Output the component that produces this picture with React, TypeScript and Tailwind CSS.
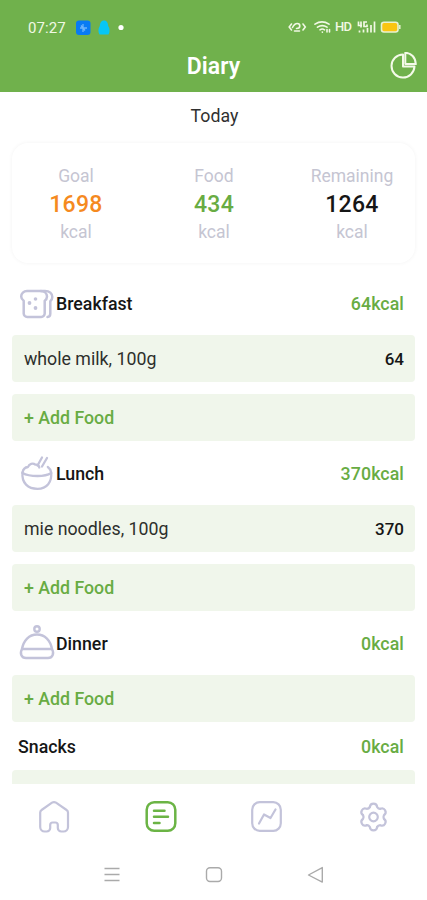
import type { ReactNode } from "react";

interface FoodEntry {
  name: string;
  kcal: number;
}

interface Meal {
  title: string;
  kcal: number;
  icon?: ReactNode;
  foods: FoodEntry[];
  collapsed?: boolean;
}

const BreadIcon = () => (
  <svg width="38" height="38" viewBox="-1 -1.5 38 38" fill="none" stroke="#c3c3da" strokeWidth="2.500" strokeLinecap="round" strokeLinejoin="round" aria-hidden="true">
    <path d="M8 4.500h13.500c3.800 0 6.500 2.400 6.500 5.500 0 2-1 3.400-2.300 4.200V27a3.500 3.500 0 0 1-3.500 3.500H8.200A3.500 3.500 0 0 1 4.700 27V14.200C3.200 13.200 2.200 11.800 2.200 10c0-3.100 2.500-5.500 5.800-5.500Z" />
    <path d="M22 4.500h4c4.500 0 7.300 2.500 7.300 6 0 1.900-.8 3.200-2 4.200V27c0 2-1 3.400-2.800 3.600" />
    <g fill="#c3c3da" stroke="none">
      <circle cx="16.500" cy="12.500" r="1.800" />
      <circle cx="10.500" cy="16.500" r="1.900" />
      <circle cx="16.500" cy="21.500" r="1.900" />
    </g>
  </svg>
);

const BowlIcon = () => (
  <svg width="38" height="38" viewBox="-1 0 38 38" fill="none" stroke="#c3c3da" strokeWidth="2.300" strokeLinecap="round" strokeLinejoin="round" aria-hidden="true">
    <path d="M3.500 17.500C2.500 28 9 33.800 18.500 33.800S33 27 32.200 17.500c-.5-2.500-1.500-4.200-3.400-5.500" />
    <path d="M3.500 18c4 2.300 9.300 3 15 3s10-.7 13.700-3" />
    <path d="M3.500 17.500c.6-3.300 2.500-5.200 5.500-5.500 1-3.300 5-4.500 7.300-2.300 2.200-.5 3.500.5 4 2.800" />
    <path d="M18.500 10.500 23 2.500M23 11.500l5-8.500" />
  </svg>
);

const ClocheIcon = () => (
  <svg width="38" height="38" viewBox="0 0.500 38 38" fill="none" stroke="#c3c3da" strokeWidth="2.400" strokeLinecap="round" strokeLinejoin="round" aria-hidden="true">
    <circle cx="19" cy="4.500" r="2.700" />
    <path d="M4 24.500C5.500 16 11 10 19 10S32.500 16 34 24.500" />
    <path d="M4 24.500h30c2.500 4.500.5 9-4 9H8c-4.500 0-6.500-4.500-4-9Z" />
  </svg>
);

const MEALS: Meal[] = [
  {
    title: "Breakfast",
    kcal: 64,
    icon: <BreadIcon />,
    foods: [{ name: "whole milk, 100g", kcal: 64 }],
  },
  {
    title: "Lunch",
    kcal: 370,
    icon: <BowlIcon />,
    foods: [{ name: "mie noodles, 100g", kcal: 370 }],
  },
  { title: "Dinner", kcal: 0, icon: <ClocheIcon />, foods: [] },
  { title: "Snacks", kcal: 0, foods: [], collapsed: true },
];

const StatusBar = () => (
  <div className="flex h-[40px] items-end justify-between pr-[25px] pl-7 text-[#f1f8e4]">
    <div className="flex h-[26px] items-center pt-0.5">
      <span className="w-[48px] text-[15px] tracking-[0.1px]">07:27</span>
      <svg className="-mt-px" width="50" height="16" viewBox="0 0 50 16" aria-hidden="true">
        <rect x="0" y="0.500" width="14.500" height="14.500" rx="3" fill="#087bf4" />
        <path d="M4 8h7M7 4v8M5 5.500l4 5" stroke="#6cb4fb" strokeWidth="1.300" />
        <path d="M28 0.500c3 0 4 2.500 4.200 5.500C34 8.500 34 12 32.500 14.500h-9C22 12 22 8.500 23.800 6 24 3 25 0.500 28 0.500Z" fill="#08c6f5" />
        <circle cx="45" cy="7.500" r="2.600" fill="#fff" />
      </svg>
    </div>
    <div className="flex h-[26px] items-center">
      <svg width="47" height="16" viewBox="0 0 47 16" fill="none" stroke="currentColor" strokeWidth="1.600" strokeLinecap="round" aria-hidden="true">
        <path d="m3.500 5-2.300 3 2.300 3M15 5l2.300 3L15 11M4.500 8.500C6 5.500 7.500 4.500 9.300 4.500s2.500 1 2.500 2.500S10.500 9.500 8.500 9.500M6.500 12h5" />
        <path d="M27 5.200c4.500-3 9.500-3 14 0M29.500 8.200c3-2 6.500-2 9.500 0M32 10.800c1.500-1 3-1 4.500 0M34.300 13l.1.100M39 10.500v2.500M41.500 10.500v2.500" />
      </svg>
      <span className="w-[21px] text-[13px] leading-4 font-medium tracking-[-0.8px]">HD</span>
      <svg width="24" height="16" viewBox="0 0 24 16" fill="none" stroke="currentColor" strokeWidth="1.700" aria-hidden="true">
        <path d="M2.500 2.500v4h3.500M5 2.500v6M11 3H8v4.500h3V5.500M3.500 11.500v2M7.500 10.500v3M11.500 9v4.500M15 6v7.500M18.500 2.500v11" />
      </svg>
      <svg width="22" height="16" viewBox="0 0 22 16" aria-hidden="true">
        <rect x="1.500" y="3.200" width="16.500" height="9.800" rx="2.500" fill="#fac512" stroke="#e9f2d0" strokeWidth="1.600" />
        <path d="M19.800 6v4" stroke="#e9f2d0" strokeWidth="1.500" />
      </svg>
    </div>
  </div>
);

const Header = () => (
  <header className="h-[92px] shrink-0 bg-[#70b14c]">
    <StatusBar />
    <div className="grid h-[52px] grid-cols-[1fr_auto_1fr] items-center text-white">
      <h1 className="col-start-2 pt-0.5 text-[23px] font-semibold tracking-[0.1px]">Diary</h1>
      <button type="button" className="mr-[9px] justify-self-end" aria-label="Statistics">
        <svg width="28" height="28" viewBox="0 0 28 28" fill="none" stroke="#f4fae9" strokeWidth="2" strokeLinejoin="round" aria-hidden="true">
          <path d="M13 2.500a11.500 11.500 0 1 0 11.500 12H13Z" />
          <path d="M15.300.8c6 .2 10.200 4.500 10.500 11.300H15.300Z" />
        </svg>
      </button>
    </div>
  </header>
);

interface StatProps {
  label: string;
  value: number;
  valueClassName: string;
}

const Stat = ({ label, value, valueClassName }: StatProps) => (
  <div className="flex w-[126px] flex-col items-center text-[17.500px] leading-7 text-[#c5c5d2]">
    <span>{label}</span>
    <span className={`pt-px text-[23px] leading-[27px] font-medium tracking-[0.300px] ${valueClassName}`}>{value}</span>
    <span>kcal</span>
  </div>
);

const MealSection = ({ title, kcal, icon, foods, collapsed }: Meal) => (
  <section className="text-[17.750px]">
    <div className={`flex items-center justify-between pt-0.5 pr-[11px] pl-1.5 font-medium ${icon ? "h-16" : "h-12"}`}>
      <h2 className="flex items-center text-[#161616]">
        {icon && <span className="w-[38px]">{icon}</span>}
        {title}
      </h2>
      <span className="tracking-[0.100px] text-[#68ac43]">{kcal}kcal</span>
    </div>
    <div className="grid gap-3">
      {foods.map((food) => (
        <div key={food.name} className="flex h-[47px] items-center justify-between rounded bg-[#f0f6eb] pt-0.5 pr-[11px] pl-3 text-[#2d2f2c]">
          <span>{food.name}</span>
          <span className="text-[17px] font-medium text-[#161616]">{food.kcal}</span>
        </div>
      ))}
      {collapsed ? (
        <button type="button" className="h-[14px] rounded-t bg-[#f0f6eb]" aria-label="Add food" />
      ) : (
        <button type="button" className="h-[47px] rounded bg-[#f0f6eb] pt-0.5 pl-3 text-left font-medium text-[#68ac43]">
          + Add Food
        </button>
      )}
    </div>
  </section>
);

const GEAR_ANGLES = [0, 60, 120, 180, 240, 300];

const TabBar = () => (
  <nav className="grid h-[65px] shrink-0 grid-cols-4 items-center justify-items-center pl-px text-[#c3c3da]">
    <button type="button" aria-label="Home">
      <svg width="34" height="34" viewBox="0 0 34 34" fill="none" stroke="currentColor" strokeWidth="2.200" strokeLinejoin="round" aria-hidden="true">
        <path d="M15 2.700 4.600 10a3 3 0 0 0-1.400 2.500v14.500a4.500 4.500 0 0 0 4.500 4.500h2a3.500 3.500 0 0 0 3.500-3.500V25c0-1.500 1-2.500 2.500-2.500h2.600c1.500 0 2.500 1 2.500 2.500v3a3.500 3.500 0 0 0 3.500 3.500h2.200a4.500 4.500 0 0 0 4.500-4.500V12.500a3 3 0 0 0-1.400-2.500L19 2.700a3.500 3.500 0 0 0-4 0Z" />
      </svg>
    </button>
    <button type="button" className="text-[#6bb445]" aria-label="Diary">
      <svg width="34" height="34" viewBox="0 0.500 34 34" fill="none" stroke="currentColor" strokeWidth="2.500" strokeLinecap="round" aria-hidden="true">
        <rect x="2.700" y="2.700" width="28.600" height="28.600" rx="7.500" />
        <path d="M10 11.300h10.500M10 17.300h14M10 23.500h5.500" />
      </svg>
    </button>
    <button type="button" aria-label="Progress">
      <svg width="34" height="34" viewBox="0.500 0.500 34 34" fill="none" stroke="currentColor" strokeWidth="2.200" strokeLinecap="round" strokeLinejoin="round" aria-hidden="true">
        <rect x="2.700" y="2.700" width="28.600" height="28.600" rx="7.500" />
        <path d="m9.500 24 5-9 6.500 3.500 5-8.500" />
      </svg>
    </button>
    <button type="button" aria-label="Settings">
      <svg width="34" height="34" viewBox="-16.500 -17 34 34" fill="none" stroke="currentColor" strokeWidth="2.200" strokeLinecap="round" strokeLinejoin="round" aria-hidden="true">
        <circle r="4.300" />
        {GEAR_ANGLES.map((angle) => (
          <path
            key={angle}
            transform={`rotate(${angle})`}
            d="M-3.700-9.900C-3.400-12.600-2.400-13.400 0-13.400S3.400-12.600 3.700-9.900Q4.900-8.100 6.720-8.150"
          />
        ))}
      </svg>
    </button>
  </nav>
);

const SystemNav = () => (
  <div className="flex h-[51px] shrink-0 items-center justify-center gap-[83.500px] text-[#aaaaaa]">
    <svg width="18" height="18" viewBox="0 0.500 18 18" fill="none" stroke="currentColor" strokeWidth="1.400" aria-hidden="true">
      <path d="M1.500 3h15M1.500 9h15M1.500 15h15" />
    </svg>
    <svg width="18" height="18" viewBox="0 0 18 18" fill="none" stroke="currentColor" strokeWidth="1.400" aria-hidden="true">
      <rect x="1.500" y="1.700" width="15" height="13.800" rx="3.500" />
    </svg>
    <svg width="18" height="18" viewBox="0 0 18 18" fill="none" stroke="currentColor" strokeWidth="1.400" strokeLinejoin="round" aria-hidden="true">
      <path d="M16.300 1.600v14.500L2.500 9Z" />
    </svg>
  </div>
);

export default function App() {
  return (
    <div className="flex h-[900px] w-[427px] flex-col overflow-hidden bg-white font-[Roboto,sans-serif]">
      <Header />
      <main className="min-h-0 flex-1 overflow-hidden px-3">
        <p className="pt-[11px] pl-0.5 text-center text-[17.750px] leading-[26px] text-[#303030]">Today</p>
        <div className="mt-[14px] mb-2 flex h-[120px] items-center justify-between rounded-2xl bg-white pt-0.5 pl-px shadow-[0_0_4px_rgba(0,0,0,0.05)]">
          <Stat label="Goal" value={1698} valueClassName="text-[#f58a1f]" />
          <Stat label="Food" value={434} valueClassName="text-[#68ac43]" />
          <Stat label="Remaining" value={1264} valueClassName="text-[#161616]" />
        </div>
        {MEALS.map((meal) => (
          <MealSection key={meal.title} {...meal} />
        ))}
      </main>
      <TabBar />
      <SystemNav />
    </div>
  );
}
